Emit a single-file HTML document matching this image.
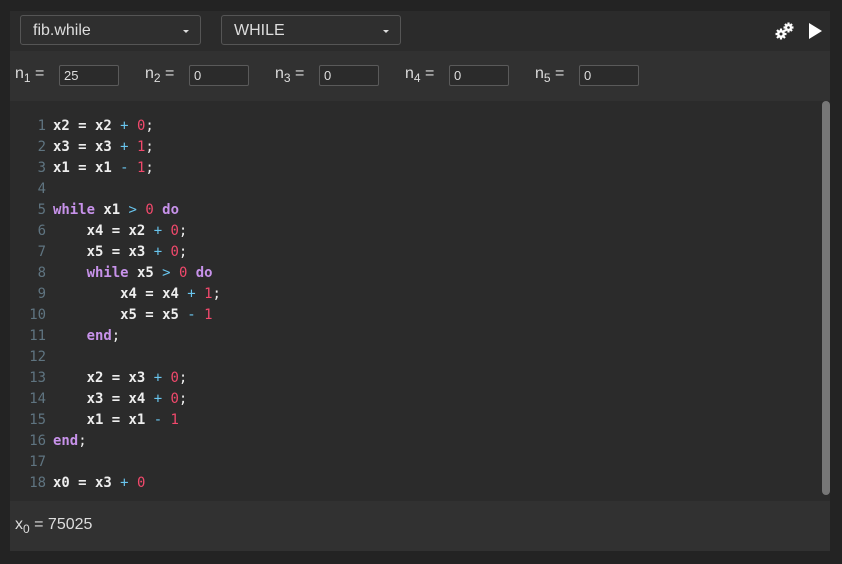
<!DOCTYPE html>
<html><head><meta charset="utf-8"><style>
body{margin:0;width:842px;height:564px;background:#232323;font-family:"Liberation Sans",sans-serif;overflow:hidden;position:relative}
.p{position:absolute;left:10px;width:820px}
.tb{top:11px;height:40px;background:#2b2b2b}
.sel{position:absolute;top:4px;height:30px;border:1px solid #555;border-radius:3px;background:#2f2f2f;color:#ddd;font-size:16px;line-height:30px;padding-left:12px;box-sizing:border-box}
.sel:after{content:"";position:absolute;right:11px;top:14px;border:3px solid transparent;border-top:3px solid #ddd;border-bottom:0}
.pr{top:51px;height:50px;background:#313131;color:#ddd;font-size:16px}
.n{position:absolute;top:14px}
.n sub{font-size:12px}
.in{position:absolute;top:14px;width:60px;height:21px;border:1px solid #5a5a5a;border-radius:2px;box-sizing:border-box;background:#2b2b2b;color:#ddd;font-size:13px;line-height:19px;padding-left:4px}
.ed{top:101px;height:400px;background:#2b2b2b}
pre{margin:0;position:absolute;left:0;top:15px;font-family:"DejaVu Sans Mono",monospace;font-size:13.95px;line-height:21px;color:#eee;font-weight:bold}
.ln{display:inline-block;width:36px;text-align:right;color:#5f7480;font-weight:normal;margin-right:7px}
.k{color:#c792ea}.o{color:#69c6ef;font-weight:normal}.d{color:#f2496c;font-weight:normal}.s{font-weight:normal}
.sb{position:absolute;right:0;top:0;width:8px;height:394px;background:#777;border-radius:4px}
.out{top:501px;height:50px;background:#313131;color:#ddd;font-size:16px}
</style></head><body>
<div class="p tb">
<div class="sel" style="left:10px;width:181px">fib.while</div>
<div class="sel" style="left:211px;width:180px">WHILE</div>
<svg style="position:absolute;left:764px;top:9px" width="22" height="22" viewBox="0 0 22 22" fill="#fff"><circle cx="7" cy="14" r="4"/><circle cx="14.5" cy="7.5" r="3.5"/><g stroke="#fff" stroke-width="2.2"><path d="M7 8.5v11M1.5 14h11M3 10l8 8M11 10l-8 8M14.5 2.5v10M9.5 7.5h10M11 4l7 7M18 4l-7 7"/></g><circle cx="7" cy="14" r="1.5" fill="#2b2b2b"/><circle cx="14.5" cy="7.5" r="1.3" fill="#2b2b2b"/></svg>
<svg style="position:absolute;left:799px;top:12px" width="14" height="16"><path d="M0 0L13 8L0 16Z" fill="#fff"/></svg>
</div>
<div class="p pr">
<span class="n" style="left:5px">n<sub>1</sub> =</span><div class="in" style="left:49px">25</div>
<span class="n" style="left:135px">n<sub>2</sub> =</span><div class="in" style="left:179px">0</div>
<span class="n" style="left:265px">n<sub>3</sub> =</span><div class="in" style="left:309px">0</div>
<span class="n" style="left:395px">n<sub>4</sub> =</span><div class="in" style="left:439px">0</div>
<span class="n" style="left:525px">n<sub>5</sub> =</span><div class="in" style="left:569px">0</div>
</div>
<div class="p ed">
<pre><span class="ln">1</span>x2 = x2 <span class="o">+</span> <span class="d">0</span><span class="s">;</span>
<span class="ln">2</span>x3 = x3 <span class="o">+</span> <span class="d">1</span><span class="s">;</span>
<span class="ln">3</span>x1 = x1 <span class="o">-</span> <span class="d">1</span><span class="s">;</span>
<span class="ln">4</span>
<span class="ln">5</span><span class="k">while</span> x1 <span class="o">&gt;</span> <span class="d">0</span> <span class="k">do</span>
<span class="ln">6</span>    x4 = x2 <span class="o">+</span> <span class="d">0</span><span class="s">;</span>
<span class="ln">7</span>    x5 = x3 <span class="o">+</span> <span class="d">0</span><span class="s">;</span>
<span class="ln">8</span>    <span class="k">while</span> x5 <span class="o">&gt;</span> <span class="d">0</span> <span class="k">do</span>
<span class="ln">9</span>        x4 = x4 <span class="o">+</span> <span class="d">1</span><span class="s">;</span>
<span class="ln">10</span>        x5 = x5 <span class="o">-</span> <span class="d">1</span>
<span class="ln">11</span>    <span class="k">end</span><span class="s">;</span>
<span class="ln">12</span>
<span class="ln">13</span>    x2 = x3 <span class="o">+</span> <span class="d">0</span><span class="s">;</span>
<span class="ln">14</span>    x3 = x4 <span class="o">+</span> <span class="d">0</span><span class="s">;</span>
<span class="ln">15</span>    x1 = x1 <span class="o">-</span> <span class="d">1</span>
<span class="ln">16</span><span class="k">end</span><span class="s">;</span>
<span class="ln">17</span>
<span class="ln">18</span>x0 = x3 <span class="o">+</span> <span class="d">0</span></pre>
<div class="sb"></div>
</div>
<div class="p out"><span style="position:absolute;left:5px;top:15px">x<sub style="font-size:12px">0</sub> = 75025</span></div>
</body></html>
